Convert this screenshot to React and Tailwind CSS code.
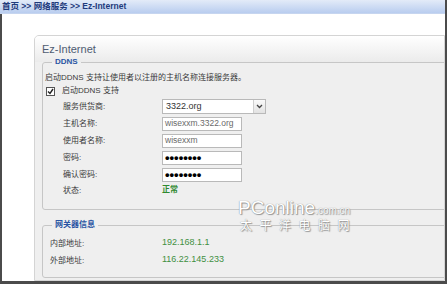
const DDNS_ROWS = [
  { label: '主机名称:', value: 'wisexxm.3322.org', muted: true },
  { label: '使用者名称:', value: 'wisexxm', muted: true },
  { label: '密码:', value: '••••••••', dots: true },
  { label: '确认密码:', value: '••••••••', dots: true },
]

const GATEWAY = [
  { label: '内部地址:', value: '192.168.1.1' },
  { label: '外部地址:', value: '116.22.145.233' },
]

export default function App() {
  return (
    <div className="relative w-[447px] h-[284px] overflow-hidden bg-white border-r-2 border-[#4b4b4b] font-['Liberation_Sans','Noto_Sans_CJK_SC',sans-serif] text-[#3a3a3a]">
      {/* breadcrumb */}
      <div className="h-[14px] flex items-center pl-[2px] bg-gradient-to-b from-[#e3ebf8] to-[#b9cdef] border-b border-[#c6d5ef] text-[8.5px] font-bold leading-none text-[#1f3b7c]">
        首页 &gt;&gt; 网络服务 &gt;&gt; Ez-Internet
      </div>

      <div className="h-[270px] border-l-2 border-b-[3px] border-[#4b4b4b] pl-[32px] pt-[21px] overflow-hidden">
        <div className="h-full rounded-tl-[5px] border border-[#d4d4d4] bg-[#efefef] overflow-hidden">
          <div className="h-[26px] flex items-center pl-[7px] bg-gradient-to-b from-white to-[#ebebeb] text-[11px] leading-none text-[#4f5c72]">
            Ez-Internet
          </div>

          <div className="pl-[7px]">
            {/* DDNS */}
            <fieldset className="-mt-[5px] w-[600px] rounded-[3px] border border-[#c6c6c6] px-[2px] pb-[10px] text-[8px] leading-none">
              <legend className="ml-[7px] px-[3px] h-[10px] leading-[10px] text-[8px] font-bold text-[#2a55a3]">DDNS</legend>
              <div className="mt-[5px] h-[12px] flex items-center">启动DDNS 支持让使用者以注册的主机名称连接服务器。</div>
              <div className="h-[14px] flex items-center">
                <span className="ml-[1px] w-[9px] h-[9px] border border-[#555] bg-white flex items-center justify-center">
                  <svg width="7" height="7" viewBox="0 0 7 7">
                    <path d="M1 3.5 L3 5.5 L6 1" fill="none" stroke="#222" strokeWidth="1.4" />
                  </svg>
                </span>
                <span className="ml-[7px]">启动DDNS 支持</span>
              </div>
              <div className="h-[17px] flex items-center">
                <span className="ml-[18px] w-[99px]">服务供货商:</span>
                <div className="w-[104px] h-[15px] flex border border-[#b9b9b9] bg-white">
                  <span className="flex-1 flex items-center pl-[3px] text-[9px] text-[#333]">3322.org</span>
                  <span className="w-[12px] flex items-center justify-center border-l border-[#cfcfcf] bg-gradient-to-b from-[#fafafa] to-[#e2e2e2]">
                    <svg width="7" height="5" viewBox="0 0 7 5">
                      <path d="M1 1 L3.5 3.5 L6 1" fill="none" stroke="#444" strokeWidth="1.3" />
                    </svg>
                  </span>
                </div>
              </div>
              {DDNS_ROWS.map((r) => (
                <div key={r.label} className="h-[17px] flex items-center">
                  <span className="ml-[18px] w-[99px]">{r.label}</span>
                  <span
                    className={
                      r.dots
                        ? 'w-[80px] h-[14px] flex items-center pl-[2px] border border-[#b9b9b9] bg-white text-[13px] font-bold overflow-hidden text-black'
                        : 'w-[80px] h-[14px] flex items-center pl-[2px] border border-[#b9b9b9] bg-white text-[8.5px] overflow-hidden text-[#6a6a6a]'
                    }
                  >
                    {r.value}
                  </span>
                </div>
              ))}
              <div className="h-[16px] flex items-center">
                <span className="ml-[18px] w-[99px]">状态:</span>
                <span className="-mt-[3px] font-bold text-[#2f8a2f]">正常</span>
              </div>
            </fieldset>

            {/* gateway */}
            <fieldset className="mt-[10px] w-[600px] rounded-[3px] border border-[#c6c6c6] px-[2px] pb-[8px] text-[8px] leading-none">
              <legend className="ml-[7px] px-[3px] h-[10px] leading-[10px] text-[8px] font-bold text-[#2a55a3]">网关器信息</legend>
              <div className="mt-[5px]">
                {GATEWAY.map((g) => (
                  <div key={g.label} className="h-[17px] flex items-center">
                    <span className="ml-[5px] w-[112px]">{g.label}</span>
                    <span className="-mt-[3px] text-[9px] text-[#3f8f3f]">{g.value}</span>
                  </div>
                ))}
              </div>
            </fieldset>
          </div>
        </div>
      </div>

      {/* watermark */}
      <div className="absolute left-[238px] top-[198px] leading-none pointer-events-none">
        <div className="flex items-baseline text-white [text-shadow:0_0_1px_#777,1px_1px_1px_#999]">
          <span className="text-[19px] font-['Liberation_Sans',sans-serif]">PConline</span>
          <span className="text-[10px]">.com.cn</span>
        </div>
        <div className="mt-[3px] pl-[2px] text-[12px] tracking-[7.5px] text-white [text-shadow:0_0_1px_#777,1px_1px_1px_#999]">
          太平洋电脑网
        </div>
      </div>
    </div>
  )
}
